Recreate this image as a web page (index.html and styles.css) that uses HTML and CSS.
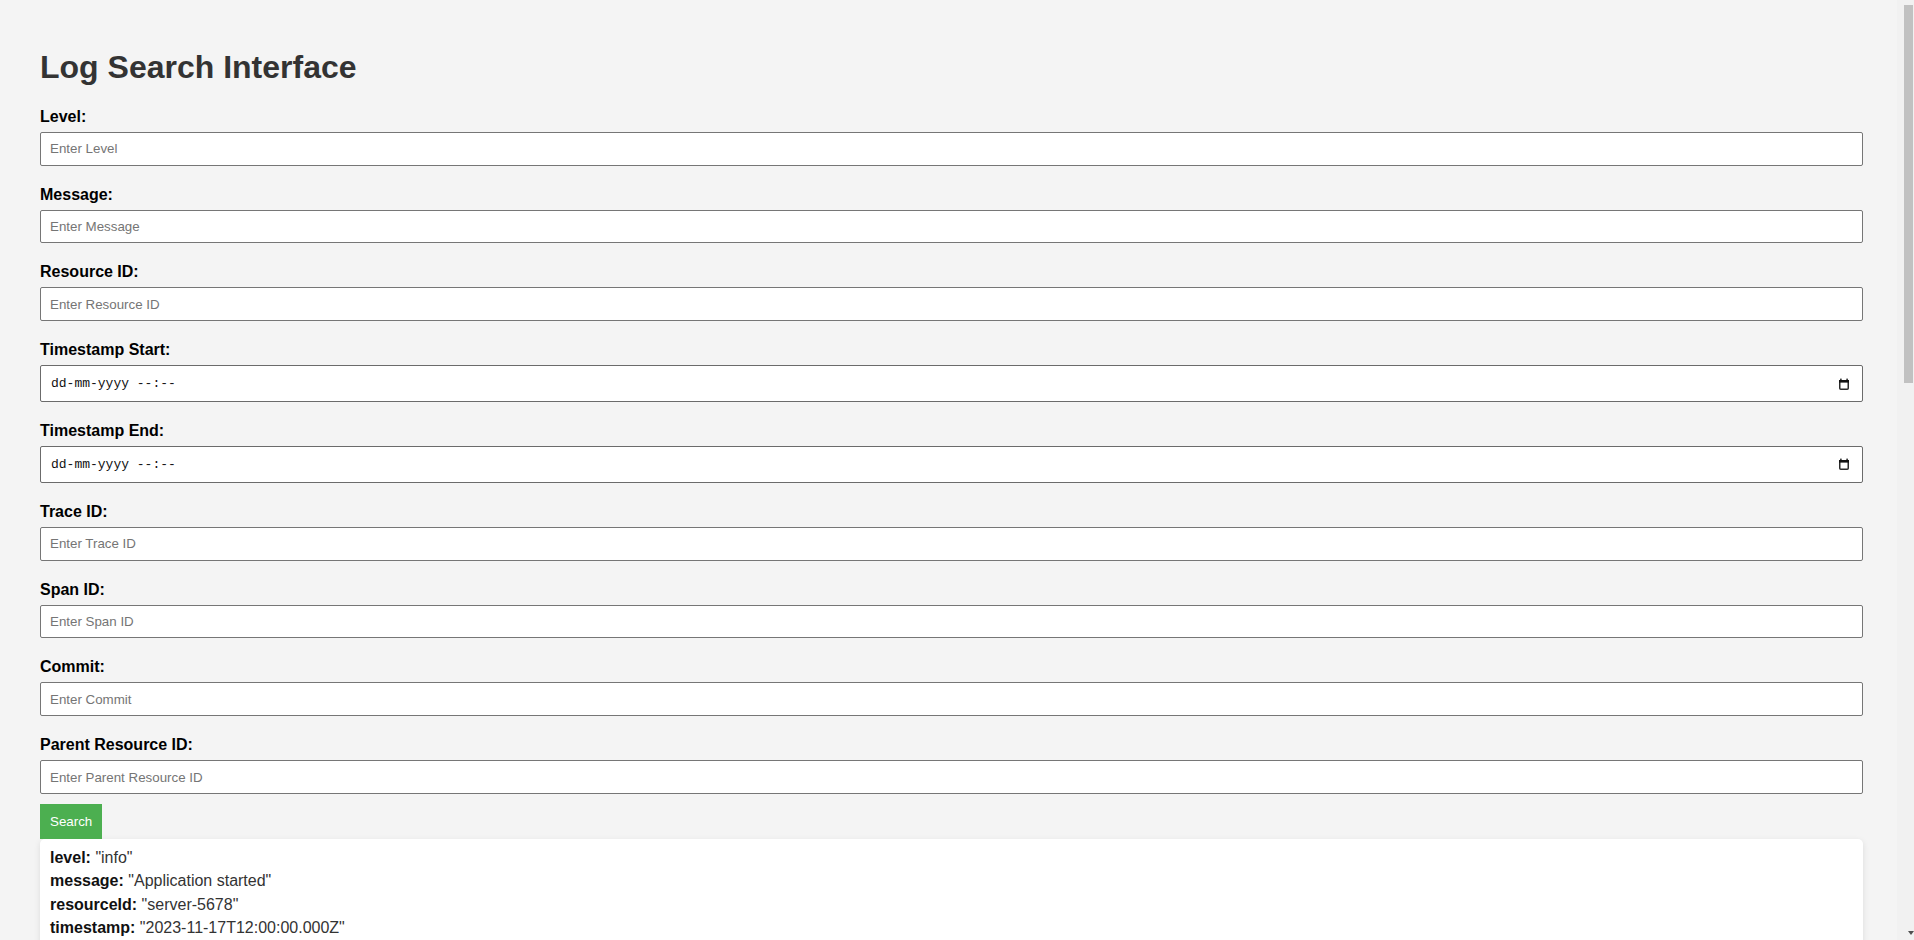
FILE: index.html
```html
<!DOCTYPE html>
<html lang="en">
<head>
<meta charset="utf-8">
<title>Log Search Interface</title>
<link rel="stylesheet" href="styles.css">
</head>
<body>
<div class="page">
<div class="container">
  <h1>Log Search Interface</h1>
  <form class="search-form">
    <label for="level">Level:</label>
    <input id="level" type="text" placeholder="Enter Level">

    <label for="message">Message:</label>
    <input id="message" type="text" placeholder="Enter Message">

    <label for="resourceId">Resource ID:</label>
    <input id="resourceId" type="text" placeholder="Enter Resource ID">

    <label>Timestamp Start:</label>
    <div class="date-field">
      <span class="date-text">dd-mm-yyyy --:--</span>
      <svg class="cal-icon" width="12" height="12" viewBox="0 0 12 12"><rect x="1.75" y="2.75" width="8.5" height="8.5" rx="1" fill="none" stroke="#2b2b2b" stroke-width="1.5"/><rect x="1" y="2" width="10" height="2.6" fill="#111"/><rect x="2.2" y="0.6" width="1.4" height="2" fill="#111"/><rect x="8.4" y="0.6" width="1.4" height="2" fill="#111"/></svg>
    </div>

    <label>Timestamp End:</label>
    <div class="date-field">
      <span class="date-text">dd-mm-yyyy --:--</span>
      <svg class="cal-icon" width="12" height="12" viewBox="0 0 12 12"><rect x="1.75" y="2.75" width="8.5" height="8.5" rx="1" fill="none" stroke="#2b2b2b" stroke-width="1.5"/><rect x="1" y="2" width="10" height="2.6" fill="#111"/><rect x="2.2" y="0.6" width="1.4" height="2" fill="#111"/><rect x="8.4" y="0.6" width="1.4" height="2" fill="#111"/></svg>
    </div>

    <label for="traceId">Trace ID:</label>
    <input id="traceId" type="text" placeholder="Enter Trace ID">

    <label for="spanId">Span ID:</label>
    <input id="spanId" type="text" placeholder="Enter Span ID">

    <label for="commit">Commit:</label>
    <input id="commit" type="text" placeholder="Enter Commit">

    <label for="parentResourceId">Parent Resource ID:</label>
    <input id="parentResourceId" type="text" placeholder="Enter Parent Resource ID">

    <button type="button" class="search-btn">Search</button>
  </form>

  <div class="results">
    <div class="log-entry">
      <div class="row"><span class="key">level:</span> <span class="val">"info"</span></div>
      <div class="row"><span class="key">message:</span> <span class="val">"Application started"</span></div>
      <div class="row"><span class="key">resourceId:</span> <span class="val">"server-5678"</span></div>
      <div class="row"><span class="key">timestamp:</span> <span class="val">"2023-11-17T12:00:00.000Z"</span></div>
      <div class="row"><span class="key">traceId:</span> <span class="val">"def-uvw-456"</span></div>
      <div class="row"><span class="key">spanId:</span> <span class="val">"span-789"</span></div>
      <div class="row"><span class="key">commit:</span> <span class="val">"7a1b2c3"</span></div>
      <div class="row"><span class="key">metadata:</span> <span class="val">{"parentResourceId":"server-0987"}</span></div>
    </div>
    <div class="log-entry">
      <div class="row"><span class="key">level:</span> <span class="val">"error"</span></div>
      <div class="row"><span class="key">message:</span> <span class="val">"Failed to connect to DB"</span></div>
      <div class="row"><span class="key">resourceId:</span> <span class="val">"server-1234"</span></div>
      <div class="row"><span class="key">timestamp:</span> <span class="val">"2023-09-15T08:00:00.000Z"</span></div>
      <div class="row"><span class="key">traceId:</span> <span class="val">"abc-xyz-123"</span></div>
      <div class="row"><span class="key">spanId:</span> <span class="val">"span-456"</span></div>
      <div class="row"><span class="key">commit:</span> <span class="val">"5e5342f"</span></div>
      <div class="row"><span class="key">metadata:</span> <span class="val">{"parentResourceId":"server-0987"}</span></div>
    </div>
    <div class="log-entry">
      <div class="row"><span class="key">level:</span> <span class="val">"warn"</span></div>
      <div class="row"><span class="key">message:</span> <span class="val">"High memory usage"</span></div>
      <div class="row"><span class="key">resourceId:</span> <span class="val">"server-4321"</span></div>
      <div class="row"><span class="key">timestamp:</span> <span class="val">"2023-10-02T14:30:00.000Z"</span></div>
      <div class="row"><span class="key">traceId:</span> <span class="val">"ghi-rst-789"</span></div>
      <div class="row"><span class="key">spanId:</span> <span class="val">"span-123"</span></div>
      <div class="row"><span class="key">commit:</span> <span class="val">"9f8e7d6"</span></div>
      <div class="row"><span class="key">metadata:</span> <span class="val">{"parentResourceId":"server-1111"}</span></div>
    </div>
    <div class="log-entry">
      <div class="row"><span class="key">level:</span> <span class="val">"debug"</span></div>
      <div class="row"><span class="key">message:</span> <span class="val">"Cache refreshed"</span></div>
      <div class="row"><span class="key">resourceId:</span> <span class="val">"server-8765"</span></div>
      <div class="row"><span class="key">timestamp:</span> <span class="val">"2023-11-01T09:15:00.000Z"</span></div>
      <div class="row"><span class="key">traceId:</span> <span class="val">"jkl-opq-321"</span></div>
      <div class="row"><span class="key">spanId:</span> <span class="val">"span-654"</span></div>
      <div class="row"><span class="key">commit:</span> <span class="val">"1a2b3c4"</span></div>
      <div class="row"><span class="key">metadata:</span> <span class="val">{"parentResourceId":"server-2222"}</span></div>
    </div>
    <div class="log-entry">
      <div class="row"><span class="key">level:</span> <span class="val">"info"</span></div>
      <div class="row"><span class="key">message:</span> <span class="val">"User logged in"</span></div>
      <div class="row"><span class="key">resourceId:</span> <span class="val">"server-3456"</span></div>
      <div class="row"><span class="key">timestamp:</span> <span class="val">"2023-11-10T18:45:00.000Z"</span></div>
      <div class="row"><span class="key">traceId:</span> <span class="val">"mno-lmn-654"</span></div>
      <div class="row"><span class="key">spanId:</span> <span class="val">"span-987"</span></div>
      <div class="row"><span class="key">commit:</span> <span class="val">"4d5e6f7"</span></div>
      <div class="row"><span class="key">metadata:</span> <span class="val">{"parentResourceId":"server-3333"}</span></div>
    </div>
    <div class="log-entry">
      <div class="row"><span class="key">level:</span> <span class="val">"error"</span></div>
      <div class="row"><span class="key">message:</span> <span class="val">"Request timeout"</span></div>
      <div class="row"><span class="key">resourceId:</span> <span class="val">"server-6543"</span></div>
      <div class="row"><span class="key">timestamp:</span> <span class="val">"2023-11-12T07:20:00.000Z"</span></div>
      <div class="row"><span class="key">traceId:</span> <span class="val">"pqr-stu-987"</span></div>
      <div class="row"><span class="key">spanId:</span> <span class="val">"span-321"</span></div>
      <div class="row"><span class="key">commit:</span> <span class="val">"8c9d0e1"</span></div>
      <div class="row"><span class="key">metadata:</span> <span class="val">{"parentResourceId":"server-4444"}</span></div>
    </div>
    <div class="log-entry">
      <div class="row"><span class="key">level:</span> <span class="val">"info"</span></div>
      <div class="row"><span class="key">message:</span> <span class="val">"Job completed"</span></div>
      <div class="row"><span class="key">resourceId:</span> <span class="val">"server-7777"</span></div>
      <div class="row"><span class="key">timestamp:</span> <span class="val">"2023-11-14T22:05:00.000Z"</span></div>
      <div class="row"><span class="key">traceId:</span> <span class="val">"stu-vwx-111"</span></div>
      <div class="row"><span class="key">spanId:</span> <span class="val">"span-222"</span></div>
      <div class="row"><span class="key">commit:</span> <span class="val">"2f3a4b5"</span></div>
      <div class="row"><span class="key">metadata:</span> <span class="val">{"parentResourceId":"server-5555"}</span></div>
    </div>
  </div>
</div>
</div>
<div class="scrollbar" aria-hidden="true">
  <div class="scroll-thumb"></div>
  <div class="scroll-arrow"></div>
</div>
</body>
</html>
```

FILE: styles.css
```css
html,
body {
  height: 100%;
  margin: 0;
  overflow: hidden;
  background: #f4f4f4;
}

body {
  display: flex;
  font-family: "Liberation Sans", Arial, sans-serif;
  color: #000;
}

.page {
  flex: 1;
  min-width: 0;
  overflow: hidden;
}

.scrollbar {
  flex: none;
  width: 17px;
  display: flex;
  flex-direction: column;
  background: #f1f1f1;
}

.scroll-thumb {
  height: 378px;
  margin: 5px 1px 0 7px;
  background: #c1c1c1;
}

.scroll-arrow {
  width: 0;
  height: 0;
  margin: auto 0 5px 11px;
  border-left: 3px solid transparent;
  border-right: 3px solid transparent;
  border-top: 4px solid #505050;
}

.container {
  max-width: 1823px;
  margin-left: 40px;
  padding: 28px 0 20px;
}

h1 {
  margin: 21.44px 0;
  font-size: 32px;
  font-weight: bold;
  color: #333;
}

.search-form {
  display: flex;
  flex-direction: column;
  align-items: stretch;
}

.search-form label {
  display: block;
  margin: 10px 0 6px;
  font-size: 16px;
  font-weight: bold;
  color: #000;
}

.search-form label:first-child {
  margin-top: 0;
}

.search-form input {
  box-sizing: border-box;
  width: 100%;
  height: 33.8px;
  margin: 0 0 10px;
  padding: 8px 8px 8px 9px;
  border: 1px solid #767676;
  border-radius: 2px;
  background: #fff;
  font-family: "Liberation Sans", Arial, sans-serif;
  font-size: 13.333px;
  color: #000;
}

.search-form input::placeholder {
  color: #757575;
}

.date-field {
  box-sizing: border-box;
  height: 36.8px;
  margin: 0 0 10px;
  padding: 0 12px 0 10px;
  border: 1px solid #6b6b6b;
  border-radius: 2px;
  background: #fff;
  display: flex;
  align-items: center;
  justify-content: space-between;
}

.date-text {
  font-family: "Liberation Mono", "DejaVu Sans Mono", monospace;
  font-size: 13px;
  color: #111;
}

.cal-icon {
  display: block;
}

.search-btn {
  align-self: flex-start;
  margin: 0;
  padding: 10px;
  border: none;
  border-radius: 0;
  background: #4caf50;
  color: #fff;
  font-family: "Liberation Sans", Arial, sans-serif;
  font-size: 13.333px;
  line-height: 15px;
}

.results {
  background: #fff;
  border-radius: 5px;
  box-shadow: 0 2px 6px rgba(0, 0, 0, 0.1);
  padding: 10px;
}

.log-entry {
  margin-bottom: 14px;
}

.row {
  font-size: 16px;
  line-height: 18.4px;
  margin-bottom: 5px;
  color: #333;
}

.key {
  font-weight: bold;
  color: #111;
}
```
